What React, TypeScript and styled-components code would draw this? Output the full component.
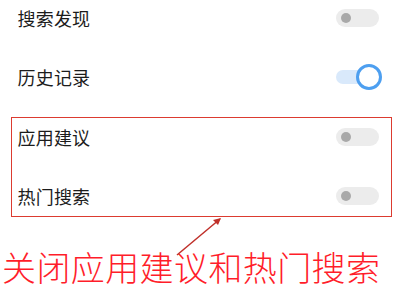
import React from "react";
import styled, { createGlobalStyle } from "styled-components";

const Global = createGlobalStyle`
  html, body { margin: 0; padding: 0; background: #ffffff; }
  body { font-family: "Noto Sans CJK SC", "Noto Sans", sans-serif; }
`;

const Page = styled.div`
  position: relative;
  width: 400px;
  height: 300px;
  overflow: hidden;
  background: #ffffff;
`;

const Settings = styled.div`
  display: flex;
  flex-direction: column;
  gap: 21px;
  padding: 0 8px 0 11px;
`;

const Section = styled.div<{ $highlight?: boolean }>`
  display: flex;
  flex-direction: column;
  gap: 23px;
  border: 1.5px solid ${(p) => (p.$highlight ? "#dc3b30" : "transparent")};
  padding: ${(p) => (p.$highlight ? "1.5px 0" : "0")};
  margin-top: ${(p) => (p.$highlight ? "0" : "-1.5px")};
`;

const Row = styled.div`
  display: flex;
  align-items: center;
  justify-content: space-between;
  height: 36px;
  padding: 0 12.5px 0 5.5px;
`;

const Label = styled.span`
  font-size: 18px;
  line-height: 1;
  color: #1c1c1c;
  letter-spacing: 0.2px;
`;

const Track = styled.div<{ $on?: boolean }>`
  position: relative;
  width: 43px;
  height: ${(p) => (p.$on ? "14px" : "18px")};
  margin: ${(p) => (p.$on ? "2px 0" : "0")};
  border-radius: 9px;
  background: ${(p) => (p.$on ? "#d9e9fb" : "#ececec")};
`;

const OffKnob = styled.div`
  position: absolute;
  left: 5px;
  top: 4px;
  width: 10px;
  height: 10px;
  border-radius: 50%;
  background: #a9a9a9;
`;

const OnKnob = styled.div`
  position: absolute;
  right: -3px;
  top: 50%;
  width: 20px;
  height: 20px;
  margin-top: -13px;
  border-radius: 50%;
  border: 3px solid #4d9ff0;
  background: #ffffff;
`;

const Caption = styled.div`
  margin-top: 33px;
  padding-left: 2px;
  font-size: 34px;
  line-height: 34px;
  color: #ff1d2a;
  font-weight: 300;
  white-space: nowrap;
  letter-spacing: 0.4px;
`;

const Arrow = styled.svg`
  position: absolute;
  left: 0;
  top: 0;
  pointer-events: none;
`;

function Toggle({ on }: { on?: boolean }) {
  return <Track $on={on}>{on ? <OnKnob /> : <OffKnob />}</Track>;
}

const items1 = [
  { label: "搜索发现", on: false },
  { label: "历史记录", on: true },
];
const items2 = [
  { label: "应用建议", on: false },
  { label: "热门搜索", on: false },
];

export default function App() {
  return (
    <>
      <Global />
      <Page>
        <Settings>
          <Section>
            {items1.map((it) => (
              <Row key={it.label}>
                <Label>{it.label}</Label>
                <Toggle on={it.on} />
              </Row>
            ))}
          </Section>
          <Section $highlight>
            {items2.map((it) => (
              <Row key={it.label}>
                <Label>{it.label}</Label>
                <Toggle on={it.on} />
              </Row>
            ))}
          </Section>
        </Settings>
        <Caption>关闭应用建议和热门搜索</Caption>
        <Arrow width="400" height="300" viewBox="0 0 400 300">
          <line x1="177" y1="255" x2="220" y2="219" stroke="#c0302a" strokeWidth="1.5" />
          <path d="M221 218 L213 220 L218 225 Z" fill="#c0302a" />
        </Arrow>
      </Page>
    </>
  );
}
